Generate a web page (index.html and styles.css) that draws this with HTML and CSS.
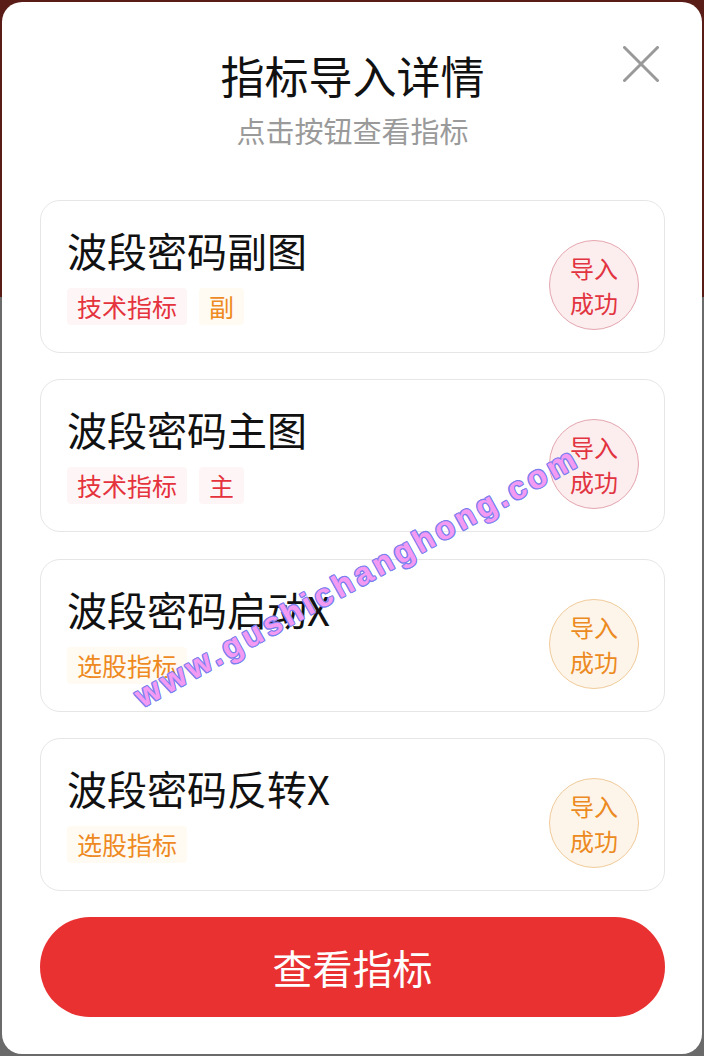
FILE: index.html
```html
<!DOCTYPE html>
<html lang="zh-CN">
<head>
<meta charset="utf-8">
<title>指标导入详情</title>
<link rel="stylesheet" href="styles.css">
</head>
<body>
<div class="modal">
  <button class="close" aria-label="关闭">
    <svg width="36" height="36" viewBox="0 0 36 36"><path d="M1.5 1.5 L34.5 34.5 M34.5 1.5 L1.5 34.5" stroke="#999" stroke-width="3" fill="none" stroke-linecap="round"/></svg>
  </button>
  <h1 class="title">指标导入详情</h1>
  <p class="subtitle">点击按钮查看指标</p>
  <div class="list">
    <div class="card">
      <div class="info">
        <div class="name">波段密码副图</div>
        <div class="tags"><span class="tag red">技术指标</span><span class="tag orange">副</span></div>
      </div>
      <div class="stamp red">导入<br>成功</div>
    </div>
    <div class="card">
      <div class="info">
        <div class="name">波段密码主图</div>
        <div class="tags"><span class="tag red">技术指标</span><span class="tag red">主</span></div>
      </div>
      <div class="stamp red">导入<br>成功</div>
    </div>
    <div class="card">
      <div class="info">
        <div class="name">波段密码启动X</div>
        <div class="tags"><span class="tag orange">选股指标</span></div>
      </div>
      <div class="stamp orange">导入<br>成功</div>
    </div>
    <div class="card">
      <div class="info">
        <div class="name">波段密码反转X</div>
        <div class="tags"><span class="tag orange">选股指标</span></div>
      </div>
      <div class="stamp orange">导入<br>成功</div>
    </div>
  </div>
  <button class="primary">查看指标</button>
  <div class="watermark">www.gushichanghong.com</div>
</div>
</body>
</html>
```
FILE: styles.css
```css
html, body {
  margin: 0;
  padding: 0;
}
body {
  width: 704px;
  height: 1056px;
  overflow: hidden;
  background: linear-gradient(to bottom, #5a1c17 0, #5a1c17 297px, #6a6a6a 297px, #6a6a6a 100%);
  font-family: "Noto Sans CJK SC", "Noto Sans", sans-serif;
}
.modal {
  position: relative;
  box-sizing: border-box;
  margin: 2px 2px 0 2px;
  width: 700px;
  height: 1052px;
  background: #fff;
  border-radius: 20px;
  padding: 45px 37px 0 38px;
  display: flex;
  flex-direction: column;
  overflow: hidden;
}
.close {
  position: absolute;
  top: 44px;
  right: 43px;
  width: 36px;
  height: 36px;
  padding: 0;
  border: 0;
  background: none;
}
.close svg { display: block; }
.title {
  margin: 0;
  text-align: center;
  font-size: 44px;
  line-height: 56px;
  font-weight: 400;
  color: #111;
}
.subtitle {
  margin: 9px 0 0;
  text-align: center;
  font-size: 29px;
  line-height: 36px;
  color: #9a9a9a;
}
.list {
  margin-top: 52px;
  display: flex;
  flex-direction: column;
  gap: 26.4px;
}
.card {
  box-sizing: border-box;
  height: 153px;
  border: 1px solid #e6e6e6;
  border-radius: 20px;
  padding: 25px 25px 0 26px;
  display: flex;
  justify-content: space-between;
  align-items: flex-start;
}
.name {
  font-size: 40px;
  line-height: 48px;
  color: #111;
}
.tags {
  margin-top: 14px;
  display: flex;
  gap: 12px;
}
.tag {
  font-size: 25px;
  line-height: 37px;
  padding: 0 10px;
  border-radius: 4px;
}
.tag.red { color: #e5333d; background: #fef5f6; }
.tag.orange { color: #ee8a1f; background: #fffaf2; }
.stamp {
  box-sizing: border-box;
  margin-top: 14px;
  width: 90px;
  height: 90px;
  border-radius: 50%;
  display: flex;
  align-items: center;
  justify-content: center;
  text-align: center;
  font-size: 24px;
  line-height: 35px;
}
.stamp.red { color: #e23440; background: #fcedef; border: 1px solid #e4a6ae; }
.stamp.orange { color: #ec8a22; background: #fef5ea; border: 1px solid #f0cb9a; }
.primary {
  margin-top: 26px;
  height: 100px;
  border: 0;
  border-radius: 50px;
  background: #e93132;
  color: #fff;
  font-family: "Noto Sans CJK SC", "Noto Sans", sans-serif;
  font-size: 40px;
  line-height: 100px;
  padding: 0;
}
.watermark {
  position: absolute;
  left: 355px;
  top: 575px;
  transform: translate(-50%, -50%) rotate(-29deg);
  white-space: nowrap;
  font-family: "Liberation Sans", Arial, sans-serif;
  font-weight: 700;
  font-size: 32px;
  letter-spacing: 4px;
  color: #f39af3;
  text-shadow: 1px 0 0 #7b80ee, -1px 0 0 #7b80ee, 0 1px 0 #7b80ee, 0 -1px 0 #7b80ee, 1px 1px 0 #7b80ee, -1px -1px 0 #7b80ee, 1px -1px 0 #7b80ee, -1px 1px 0 #7b80ee;
  pointer-events: none;
}
```
